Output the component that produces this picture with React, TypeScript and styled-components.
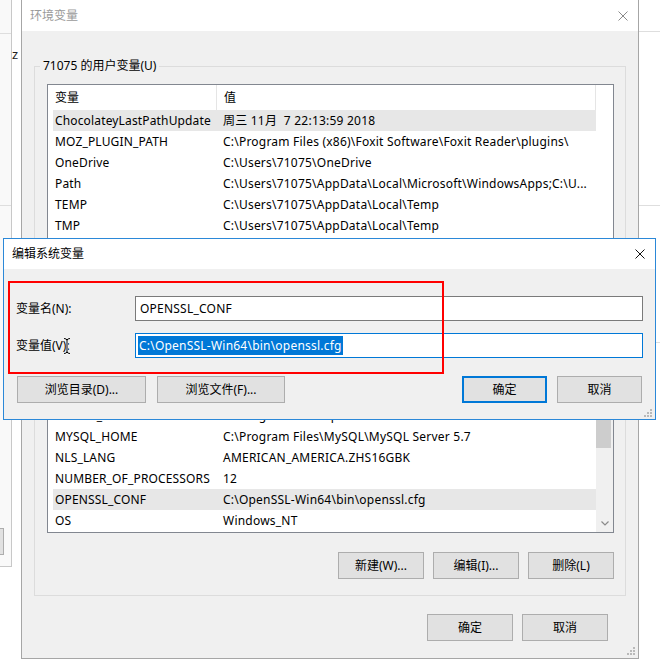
import React from "react";
import styled, { createGlobalStyle } from "styled-components";

const FONT = `"Noto Sans", "Noto Sans CJK SC", sans-serif`;

const GlobalStyle = createGlobalStyle`
  html, body { margin: 0; padding: 0; background: #ffffff; }
  body { font-family: ${FONT}; font-size: 12px; color: #000; }
  * { box-sizing: border-box; }
`;

const Desktop = styled.div`
  position: relative;
  width: 660px;
  height: 666px;
  overflow: hidden;
  background: #ffffff;
`;

/* ---------- windows behind ---------- */
const BackLeft = styled.div`
  position: absolute;
  left: 0;
  top: 0;
  width: 12px;
  height: 567px;
  background: #f9f9f9;
  border-right: 1px solid #c8c8c8;
  border-bottom: 1px solid #c8c8c8;
  display: flex;
  flex-direction: column;
`;

const BackRight = styled.div`
  position: absolute;
  left: 639px;
  top: 0;
  width: 21px;
  height: 666px;
  background: #ffffff;
  display: flex;
  flex-direction: column;
`;

const BackStrip = styled.div<{ $h: number; $indent?: number }>`
  flex: none;
  height: ${(p) => p.$h}px;
  margin-left: ${(p) => p.$indent ?? 0}px;
  border-bottom: 1px solid #dedede;
`;

const BackButton = styled.div`
  flex: none;
  margin-top: 322px;
  width: 4px;
  height: 27px;
  background: #e1e1e1;
  border: 1px solid #adadad;
  border-left: none;
`;

const StrayGlyph = styled.span`
  position: absolute;
  left: 12px;
  top: 46px;
  font-size: 13px;
  line-height: 16px;
  color: #222;
`;

/* ---------- window chrome ---------- */
const Window = styled.div`
  position: absolute;
  left: 21px;
  top: -1px;
  width: 618px;
  height: 660px;
  border: 1px solid #a6a6a6;
  background: #f0f0f0;
  display: flex;
  flex-direction: column;
`;

const Dialog = styled.div`
  position: absolute;
  left: 3px;
  top: 238px;
  width: 653px;
  height: 182px;
  border: 1px solid #2b88d8;
  background: #f0f0f0;
  display: flex;
  flex-direction: column;
`;

const TitleBar = styled.div<{ $h: number; $active?: boolean }>`
  flex: none;
  height: ${(p) => p.$h}px;
  background: #ffffff;
  display: flex;
  align-items: center;
  justify-content: space-between;
  padding: 0 10px 0 8px;
  color: ${(p) => (p.$active ? "#000000" : "#9a9a9a")};
  line-height: 16px;
`;

const CloseGlyph = styled.svg<{ $active?: boolean }>`
  flex: none;
  width: 10px;
  height: 10px;
  color: ${(p) => (p.$active ? "#111111" : "#8a8a8a")};
`;

const Close = ({ active }: { active?: boolean }) => (
  <CloseGlyph $active={active} viewBox="0 0 10 10">
    <path d="M0.5 0.5 L9.5 9.5 M9.5 0.5 L0.5 9.5" stroke="currentColor" strokeWidth="1" fill="none" />
  </CloseGlyph>
);

const GripSvg = styled.svg<{ $r: number; $b: number }>`
  position: absolute;
  right: ${(p) => p.$r}px;
  bottom: ${(p) => p.$b}px;
  width: 9px;
  height: 9px;
`;

const Grip = ({ r, b }: { r: number; b: number }) => (
  <GripSvg $r={r} $b={b} viewBox="0 0 9 9">
    {[
      [6, 0],
      [6, 3],
      [3, 3],
      [6, 6],
      [3, 6],
      [0, 6],
    ].map(([x, y], i) => (
      <rect key={i} x={x} y={y} width="2" height="2" fill="#b9b9b9" />
    ))}
  </GripSvg>
);

/* ---------- env window body ---------- */
const WinBody = styled.div`
  flex: 1;
  display: flex;
  flex-direction: column;
  padding: 35px 12px 0 12px;
`;

const Group = styled.div<{ $mt?: number }>`
  flex: none;
  margin-top: ${(p) => p.$mt ?? 0}px;
  border: 1px solid #dcdcdc;
  padding: 0 11px 16px 12px;
  display: flex;
  flex-direction: column;
`;

const Caption = styled.div`
  align-self: flex-start;
  margin: -9px 0 0 -7px;
  padding: 0 3px;
  height: 16px;
  line-height: 16px;
  background: #f0f0f0;
  white-space: nowrap;
`;

const ListBox = styled.div<{ $h: number }>`
  flex: none;
  margin-top: 10px;
  height: ${(p) => p.$h}px;
  border: 1px solid #828790;
  background: #ffffff;
  display: flex;
  overflow: hidden;
`;

const ListMain = styled.div`
  flex: 1;
  min-width: 0;
  display: flex;
  flex-direction: column;
  overflow: hidden;
`;

const HeaderRow = styled.div`
  flex: none;
  height: 25px;
  display: grid;
  grid-template-columns: 169px 1fr;
`;

const HeaderCell = styled.div`
  padding-left: 7px;
  line-height: 25px;
  border-right: 1px solid #e5e5e5;
  white-space: nowrap;
  overflow: hidden;
`;

const Row = styled.div<{ $selected?: boolean }>`
  flex: none;
  height: 21px;
  line-height: 21px;
  margin-left: 5px;
  display: grid;
  grid-template-columns: 164px 1fr;
  background: ${(p) => (p.$selected ? "#e7e7e7" : "transparent")};
`;

const NameCell = styled.div`
  padding-left: 2px;
  white-space: nowrap;
  overflow: hidden;
  letter-spacing: 0.15px;
`;

const ValueCell = styled.div`
  padding-left: 6px;
  white-space: pre;
  overflow: hidden;
  text-overflow: ellipsis;
  letter-spacing: 0.22px;
`;

const ScrollCol = styled.div<{ $track?: boolean }>`
  flex: none;
  width: 17px;
  background: ${(p) => (p.$track ? "#f0f0f0" : "#ffffff")};
  display: flex;
  flex-direction: column;
`;

const ScrollArrow = styled.div`
  flex: none;
  height: 17px;
  display: flex;
  align-items: center;
  justify-content: center;
  color: #8a8a8a;
`;

const ScrollTrack = styled.div`
  flex: 1;
`;

const ScrollThumb = styled.div`
  margin-top: 3px;
  width: 15px;
  height: 48px;
  background: #cdcdcd;
`;

const ButtonRow = styled.div<{ $mt: number; $pr?: number }>`
  flex: none;
  display: flex;
  justify-content: flex-end;
  gap: 9px;
  margin-top: ${(p) => p.$mt}px;
  padding-right: ${(p) => p.$pr ?? 0}px;
`;

const Button = styled.div<{ $w: number; $default?: boolean; $ml?: number }>`
  flex: none;
  width: ${(p) => p.$w}px;
  height: 27px;
  margin-left: ${(p) => p.$ml ?? 0}px;
  background: #e1e1e1;
  border: ${(p) => (p.$default ? "2px solid #0078d7" : "1px solid #adadad")};
  display: flex;
  align-items: center;
  justify-content: center;
  line-height: 16px;
  white-space: nowrap;
`;

/* ---------- dialog body ---------- */
const DialogBody = styled.div`
  flex: 1;
  display: flex;
  flex-direction: column;
  padding: 27px 12px 0 12px;
`;

const FieldRow = styled.div<{ $mt?: number }>`
  flex: none;
  display: grid;
  grid-template-columns: 119px 1fr;
  align-items: center;
  margin-top: ${(p) => p.$mt ?? 0}px;
`;

const FieldLabel = styled.div`
  line-height: 16px;
  white-space: nowrap;
`;

const TextBox = styled.div<{ $focused?: boolean }>`
  height: 25px;
  border: 1px solid ${(p) => (p.$focused ? "#0078d7" : "#7a7a7a")};
  background: #ffffff;
  padding-left: ${(p) => (p.$focused ? 2 : 4)}px;
  display: flex;
  align-items: center;
  white-space: nowrap;
  overflow: hidden;
  letter-spacing: 0.22px;
`;

const Selection = styled.span`
  background: #0078d7;
  color: #ffffff;
  line-height: 19px;
  padding: 0 1px;
`;

const DialogButtons = styled.div`
  flex: none;
  display: flex;
  margin-top: 18px;
  padding-right: 1px;
`;

const Spacer = styled.div`
  flex: 1;
`;

const Annotation = styled.div`
  position: absolute;
  left: 4px;
  top: 42px;
  width: 436px;
  height: 93px;
  border: 2px solid #ff0000;
  pointer-events: none;
`;

const IBeamSvg = styled.svg`
  position: absolute;
  left: 59px;
  top: 98px;
  width: 8px;
  height: 18px;
`;

const IBeam = () => (
  <IBeamSvg viewBox="0 0 8 18">
    <path
      d="M1 1.5 Q4 1.5 4 3.5 Q4 1.5 7 1.5 M4 3.5 V14.5 M1 16.5 Q4 16.5 4 14.5 Q4 16.5 7 16.5"
      stroke="#ffffff"
      strokeWidth="2.2"
      fill="none"
    />
    <path
      d="M1 1.5 Q4 1.5 4 3.5 Q4 1.5 7 1.5 M4 3.5 V14.5 M1 16.5 Q4 16.5 4 14.5 Q4 16.5 7 16.5"
      stroke="#000000"
      strokeWidth="1"
      fill="none"
    />
  </IBeamSvg>
);

const Chevron = () => (
  <svg width="8" height="5" viewBox="0 0 8 5">
    <path d="M0.5 0.5 L4 4 L7.5 0.5" stroke="currentColor" strokeWidth="1.2" fill="none" />
  </svg>
);

/* ---------- data ---------- */
type Var = { name: string; value: string; selected?: boolean };

const userVars: Var[] = [
  { name: "ChocolateyLastPathUpdate", value: "周三 11月  7 22:13:59 2018", selected: true },
  { name: "MOZ_PLUGIN_PATH", value: String.raw`C:\Program Files (x86)\Foxit Software\Foxit Reader\plugins` + "\\" },
  { name: "OneDrive", value: String.raw`C:\Users\71075\OneDrive` },
  { name: "Path", value: String.raw`C:\Users\71075\AppData\Local\Microsoft\WindowsApps;C:\U...` },
  { name: "TEMP", value: String.raw`C:\Users\71075\AppData\Local\Temp` },
  { name: "TMP", value: String.raw`C:\Users\71075\AppData\Local\Temp` },
];

const systemVars: Var[] = [
  { name: "MAVEN_HOME", value: String.raw`C:\Program Files\apache-maven-3.5.4` },
  { name: "MYSQL_HOME", value: String.raw`C:\Program Files\MySQL\MySQL Server 5.7` },
  { name: "NLS_LANG", value: "AMERICAN_AMERICA.ZHS16GBK" },
  { name: "NUMBER_OF_PROCESSORS", value: "12" },
  { name: "OPENSSL_CONF", value: String.raw`C:\OpenSSL-Win64\bin\openssl.cfg`, selected: true },
  { name: "OS", value: "Windows_NT" },
];

const VarList = ({ rows, h, scroll }: { rows: Var[]; h: number; scroll?: boolean }) => (
  <ListBox $h={h}>
    <ListMain>
      <HeaderRow>
        <HeaderCell>变量</HeaderCell>
        <HeaderCell>值</HeaderCell>
      </HeaderRow>
      {rows.map((r) => (
        <Row key={r.name} $selected={r.selected}>
          <NameCell>{r.name}</NameCell>
          <ValueCell>{r.value}</ValueCell>
        </Row>
      ))}
    </ListMain>
    <ScrollCol $track={scroll}>
      {scroll && (
        <>
          <ScrollArrow />
          <ScrollTrack>
            <ScrollThumb />
          </ScrollTrack>
          <ScrollArrow>
            <Chevron />
          </ScrollArrow>
        </>
      )}
    </ScrollCol>
  </ListBox>
);

export default function App() {
  return (
    <Desktop>
      <GlobalStyle />
      <BackLeft>
        <BackStrip $h={34} />
        <BackStrip $h={172} />
        <BackButton />
      </BackLeft>
      <StrayGlyph>z</StrayGlyph>
      <BackRight>
        <BackStrip $h={32} />
        <BackStrip $h={174} />
        <BackStrip $h={137} $indent={17} />
      </BackRight>

      <Window>
        <TitleBar $h={31}>
          <span>环境变量</span>
          <Close />
        </TitleBar>
        <WinBody>
          <Group>
            <Caption>71075 的用户变量(U)</Caption>
            <VarList rows={userVars} h={195} />
            <ButtonRow $mt={20}>
              <Button $w={86}>新建(N)...</Button>
              <Button $w={86}>编辑(E)...</Button>
              <Button $w={86}>删除(D)</Button>
            </ButtonRow>
          </Group>
          <Group $mt={18}>
            <Caption>系统变量(S)</Caption>
            <VarList rows={systemVars} h={154} scroll />
            <ButtonRow $mt={19}>
              <Button $w={86}>新建(W)...</Button>
              <Button $w={86}>编辑(I)...</Button>
              <Button $w={86}>删除(L)</Button>
            </ButtonRow>
          </Group>
          <ButtonRow $mt={18} $pr={18}>
            <Button $w={86}>确定</Button>
            <Button $w={86}>取消</Button>
          </ButtonRow>
        </WinBody>
        <Grip r={2} b={2} />
      </Window>

      <Dialog>
        <TitleBar $h={30} $active>
          <span>编辑系统变量</span>
          <Close active />
        </TitleBar>
        <DialogBody>
          <FieldRow>
            <FieldLabel>变量名(N):</FieldLabel>
            <TextBox>OPENSSL_CONF</TextBox>
          </FieldRow>
          <FieldRow $mt={12}>
            <FieldLabel>变量值(V):</FieldLabel>
            <TextBox $focused>
              <Selection>{String.raw`C:\OpenSSL-Win64\bin\openssl.cfg`}</Selection>
            </TextBox>
          </FieldRow>
          <DialogButtons>
            <Button $w={129} $ml={1}>浏览目录(D)...</Button>
            <Button $w={128} $ml={11}>浏览文件(F)...</Button>
            <Spacer />
            <Button $w={85} $default>确定</Button>
            <Button $w={85} $ml={10}>取消</Button>
          </DialogButtons>
        </DialogBody>
        <Annotation />
        <IBeam />
        <Grip r={2} b={1} />
      </Dialog>
    </Desktop>
  );
}
